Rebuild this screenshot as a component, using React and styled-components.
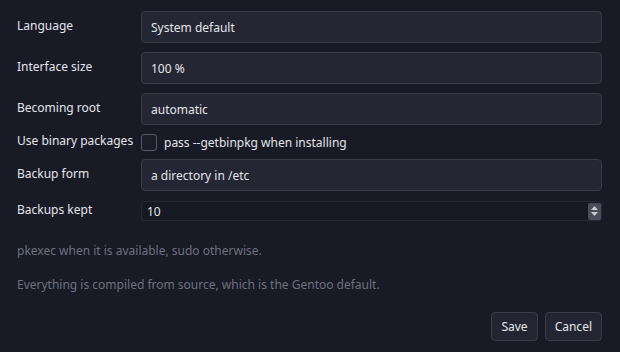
import React from 'react'
import styled, { createGlobalStyle } from 'styled-components'

const Global = createGlobalStyle`
  html, body {
    margin: 0;
    background: #181a26;
  }
  body {
    font-family: "Noto Sans", "DejaVu Sans", sans-serif;
    font-size: 12px;
    color: #e4e5ea;
  }
`

function App() {
  return (
    <Page>
      <Global />
      <Form>
        <Label>Language</Label>
        <Combo>System default</Combo>

        <Label>Interface size</Label>
        <Combo>100 %</Combo>

        <Label>Becoming root</Label>
        <Combo>automatic</Combo>

        <Label>Use binary packages</Label>
        <CheckRow>
          <Check />
          <span>pass --getbinpkg when installing</span>
        </CheckRow>

        <Label>Backup form</Label>
        <Combo>a directory in /etc</Combo>

        <Label>Backups kept</Label>
        <Spin>
          <span>10</span>
          <SpinButtons>
            <svg width="13" height="16" viewBox="0 0 13 16">
              <path d="M6.5 3 L10 7 L3 7 Z" fill="#c9cad2" />
              <path d="M6.5 13 L10 9 L3 9 Z" fill="#c9cad2" />
            </svg>
          </SpinButtons>
        </Spin>
      </Form>

      <Notes>
        <Note>pkexec when it is available, sudo otherwise.</Note>
        <Note>Everything is compiled from source, which is the Gentoo default.</Note>
      </Notes>

      <Buttons>
        <Button>Save</Button>
        <Button>Cancel</Button>
      </Buttons>
    </Page>
  )
}

export default App

const Page = styled.div`
  width: 620px;
  height: 352px;
  box-sizing: border-box;
  padding: 11px 18px 11px 17px;
  display: flex;
  flex-direction: column;
`

const Form = styled.div`
  display: grid;
  grid-template-columns: 124px 1fr;
  row-gap: 9px;
  align-items: center;
`

const Label = styled.div`
  line-height: 16px;
  margin-top: -2px;
`

const Combo = styled.div`
  height: 32px;
  box-sizing: border-box;
  display: flex;
  align-items: center;
  padding: 0 9px;
  background: #242633;
  border: 1px solid #3a3c4b;
  border-radius: 4px;
`

const CheckRow = styled.div`
  display: flex;
  align-items: center;
  gap: 7px;
  height: 16px;
`

const Check = styled.div`
  width: 16px;
  height: 17px;
  box-sizing: border-box;
  border: 1px solid #55586a;
  border-radius: 3px;
  background: #1b1d29;
`

const Spin = styled.div`
  height: 20px;
  margin-top: 1px;
  box-sizing: border-box;
  display: flex;
  align-items: center;
  justify-content: space-between;
  padding: 0 0 0 5px;
  background: #161823;
  border: 1px solid #262835;
  border-radius: 3px;
`

const SpinButtons = styled.div`
  width: 13px;
  height: 17px;
  display: flex;
  align-items: center;
  justify-content: center;
  background: #4b4d5c;
  border-radius: 2px;
`

const Notes = styled.div`
  display: flex;
  flex-direction: column;
  gap: 18px;
  margin-top: 22px;
  color: #6f717f;
  line-height: 16px;
`

const Note = styled.div``

const Buttons = styled.div`
  margin-top: auto;
  display: flex;
  justify-content: flex-end;
  gap: 7px;
`

const Button = styled.button`
  height: 29px;
  padding: 0 9px;
  font-family: inherit;
  font-size: 12px;
  color: #e4e5ea;
  background: #232532;
  border: 1px solid #3a3c4b;
  border-radius: 4px;
`
